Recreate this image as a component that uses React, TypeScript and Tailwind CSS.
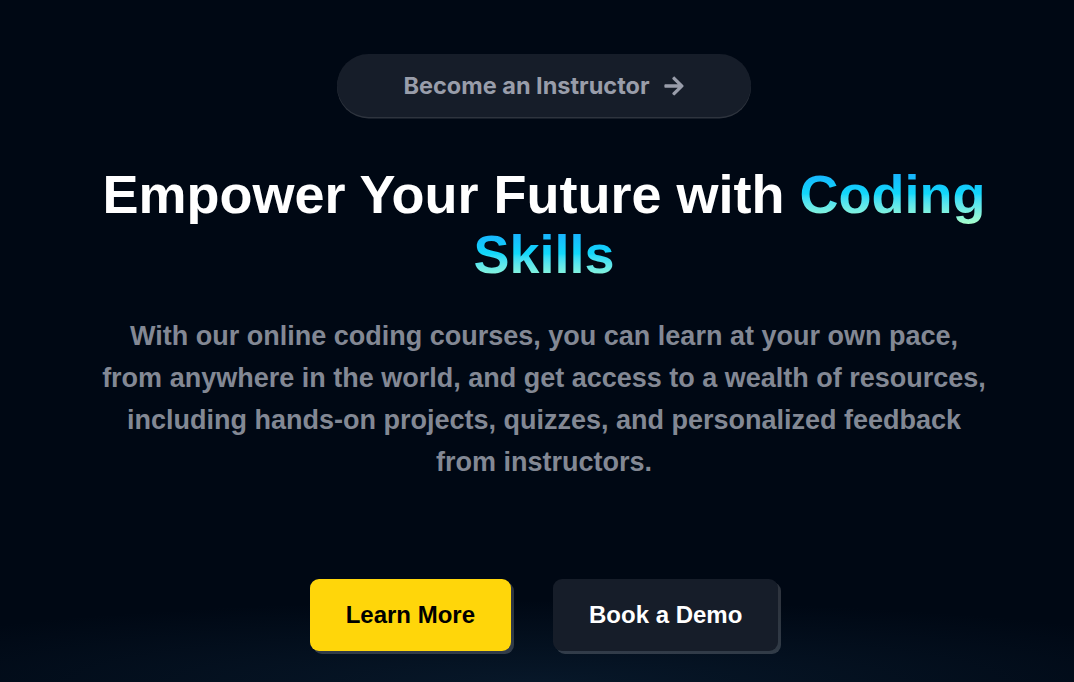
import React from "react";
import { FaArrowRight } from "react-icons/fa";

const HighlightText = ({ text }: { text: string }) => (
  <span className="bg-linear-to-b from-[#1FA2FF] via-[#12D8FA] to-[#A6FFCB] bg-clip-text text-transparent">
    {text}
  </span>
);

const CTAButton = ({ active, children }: { active?: boolean; children: React.ReactNode }) => (
  <button
    className={`rounded-[9px] px-[36px] py-[18px] text-center text-[24px] leading-[36px] font-bold shadow-[3px_3px_0_0_rgba(255,255,255,0.18)] ${
      active ? "bg-[#FFD60A] text-black" : "bg-[#161D29] text-white"
    }`}
  >
    {children}
  </button>
);

export default function App() {
  return (
    <div className="min-h-screen w-full bg-[#000814] bg-[radial-gradient(ellipse_70%_12%_at_50%_100%,rgba(16,42,66,0.45),transparent)] pl-[14px] font-['Liberation_Sans',Arial,sans-serif]">
      <div className="mx-auto flex w-11/12 flex-col items-center">
        {/* Become an instructor pill */}
        <div className="mt-[54px] rounded-full bg-[#161D29] p-[6px] font-['Inter',sans-serif] font-bold text-[#999DAA] shadow-[0_1.5px_0_0_rgba(255,255,255,0.18)]">
          <div className="flex items-center gap-[13px] rounded-full px-[60px] py-[7.5px] text-[23.5px] leading-[36px]">
            <p>Become an Instructor</p>
            <FaArrowRight className="text-[22px]" />
          </div>
        </div>

        {/* Heading */}
        <h1 className="mt-[47px] text-center text-[54px] leading-[60px] font-bold text-white">
          Empower Your Future with <HighlightText text="Coding Skills" />
        </h1>

        {/* Sub heading */}
        <p className="mt-[31px] w-[886px] text-center text-[27px] leading-[42px] font-bold text-[#838894]">
          With our online coding courses, you can learn at your own pace, from anywhere in the world, and get
          access to a wealth of resources, including hands-on projects, quizzes, and personalized feedback from
          instructors.
        </p>

        {/* Buttons */}
        <div className="mt-[96px] flex flex-row gap-[42px]">
          <CTAButton active>Learn More</CTAButton>
          <CTAButton>Book a Demo</CTAButton>
        </div>
      </div>
    </div>
  );
}
